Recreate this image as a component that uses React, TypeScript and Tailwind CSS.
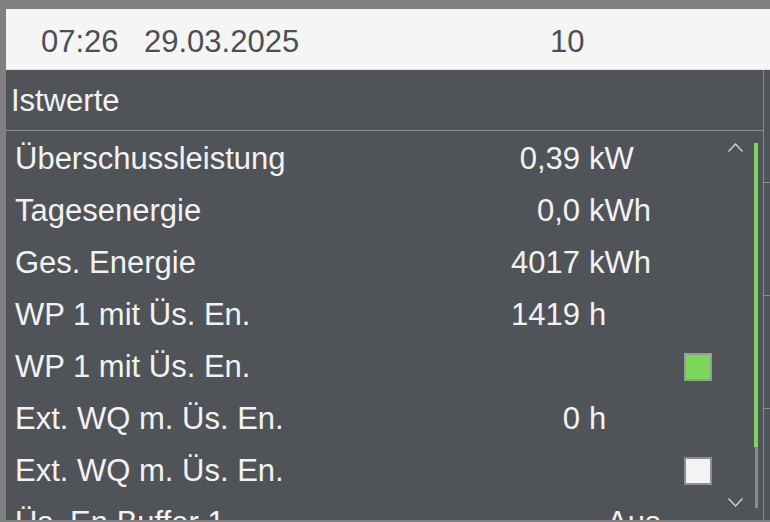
import React from "react";

type Row = {
  label: string;
  value?: string;
  unit?: string;
  check?: "on" | "off";
  aus?: boolean;
};

const rows: Row[] = [
  { label: "Überschussleistung", value: "0,39", unit: "kW" },
  { label: "Tagesenergie", value: "0,0", unit: "kWh" },
  { label: "Ges. Energie", value: "4017", unit: "kWh" },
  { label: "WP 1 mit Üs. En.", value: "1419", unit: "h" },
  { label: "WP 1 mit Üs. En.", check: "on" },
  { label: "Ext. WQ m. Üs. En.", value: "0", unit: "h" },
  { label: "Ext. WQ m. Üs. En.", check: "off" },
  { label: "Üs. En Buffer 1", aus: true },
];

function Chevron({ up }: { up?: boolean }) {
  return (
    <svg width="15" height="9" viewBox="0 0 15 9" fill="none">
      <polyline
        points={up ? "0.5,8.5 7.5,1 14.5,8.5" : "0.5,0.5 7.5,8 14.5,0.5"}
        stroke="#d2d4d6"
        strokeWidth="1.4"
        fill="none"
      />
    </svg>
  );
}

export default function App() {
  return (
    <div className="w-[770px] h-[522px] bg-[#808080] pt-[9px] pl-[6px] pb-[2px] overflow-hidden flex flex-col font-['Liberation_Sans',Arial,sans-serif]">
      <div className="h-[61px] shrink-0 bg-[#f5f5f5] flex text-[31px] leading-[57px] pt-[4px] pl-[35px] text-[#4b4f53] border-b border-[#dfe4e8]">
        <span className="w-[103px]">07:26</span>
        <span className="w-[406px]">29.03.2025</span>
        <span>10</span>
      </div>
      <div className="flex flex-1 min-h-0">
        <div className="w-[757px] bg-[#505458] flex flex-col">
          <div className="h-[61px] shrink-0 border-b border-[#8a8d90] text-[31px] leading-[58px] pt-[2px] text-[#f2f2f2] pl-[5px]">
            Istwerte
          </div>
          <div className="relative flex-1 min-h-0 overflow-hidden pt-[2px]">
            {rows.map((r, i) => (
              <div
                key={i}
                className="h-[52px] flex items-center pl-[9px] text-[31px] leading-[52px] text-[#f2f2f2] whitespace-nowrap"
              >
                <span className="w-[400px]">{r.label}</span>
                <span className="w-[165px] text-right">{r.value ?? ""}</span>
                {r.unit && <span className="ml-[9px]">{r.unit}</span>}
                {r.aus && <span className="ml-[27px]">Aus</span>}
                {r.check && (
                  <span
                    className={
                      r.check === "on"
                        ? "ml-auto mr-[51px] w-[28px] h-[28px] bg-[#7fd65e] border-2 border-[#8fa28a]"
                        : "ml-auto mr-[51px] w-[28px] h-[28px] bg-[#f3f3f3] border-2 border-[#8e8e8e]"
                    }
                  />
                )}
              </div>
            ))}
            <div className="absolute left-[722px] top-[12px] flex">
              <Chevron up />
            </div>
            <div className="absolute left-[722px] top-[367px] flex">
              <Chevron />
            </div>
            <div className="absolute left-[748px] top-[12px] w-[4px] h-[365px] flex flex-col items-center">
              <div className="w-[4px] h-[304px] bg-[#7fd065]" />
              <div className="w-[3px] flex-1 bg-[#8a8b8c]" />
            </div>
          </div>
        </div>
        <div className="flex-1 border-l border-[#8a8d90] bg-[#505458] flex flex-col">
          <div className="h-[113px] shrink-0 border-b border-[#8a8d90]" />
          <div className="h-[113px] shrink-0 border-b border-[#8a8d90]" />
          <div className="h-[113px] shrink-0 border-b border-[#8a8d90]" />
        </div>
      </div>
    </div>
  );
}
